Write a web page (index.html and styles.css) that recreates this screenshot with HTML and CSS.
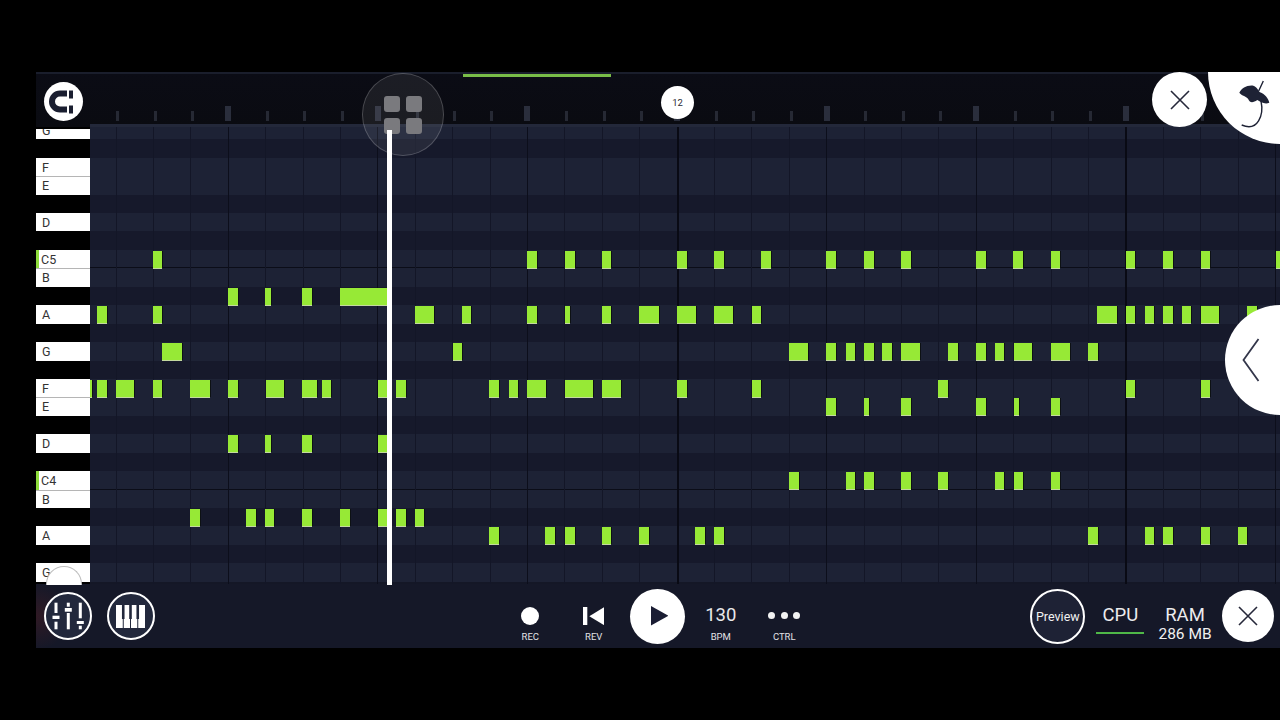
FILE: index.html
```html
<!DOCTYPE html>
<html lang="en">
<head>
<meta charset="utf-8">
<title>Piano roll</title>
<link rel="stylesheet" href="styles.css">
</head>
<body>
<main class="app">
  <header class="topbar">
    <div class="magnet-slot">
      <button class="magnet">
        <svg viewBox="0 0 39 39" width="39" height="39"><path d="M23 11.5H16a8 8 0 0 0 0 16H23" fill="none" stroke="#1a1e30" stroke-width="6"/><rect x="25" y="8.5" width="4" height="8" fill="#1a1e30"/><rect x="25" y="23.5" width="4" height="8" fill="#1a1e30"/></svg>
      </button>
    </div>
    <div class="ruler">
      <i></i><i></i><i></i><i class="big"></i><i></i><i></i><i></i><i class="big"></i><i></i><i></i><i></i><i class="big"></i><i></i><i></i><i></i><i class="big"></i><i></i><i></i><i></i><i class="big"></i><i></i><i></i><i></i><i class="big"></i><i></i><i></i><i></i><i class="big"></i><i></i><i></i><i></i><i class="big"></i>
    </div>
    <div class="progress"></div>
    <div class="bar-badge">12</div>
    <button class="round close-top"><svg viewBox="0 0 20 20" width="20" height="20"><path d="M1 1L19 19M19 1L1 19" stroke="#26283a" stroke-width="1.6"/></svg></button>
    <div class="logo">
      <svg viewBox="0 0 80 80" width="80" height="80"><path d="M39.300 22.700C41.700 18.300 46.700 15 53.300 15.700C56.700 16.700 58.300 20.700 60 22.300C65 24 68.300 28.300 69.300 32.700C65 35 60 31.700 57.300 30C53.300 32.700 50 33.300 48.300 29.300C46.700 26 41.700 26 39.300 22.700Z" fill="#1e2235"/><path d="M58.700 21L63.300 11M61 31C64 45 58 62 41.700 55" fill="none" stroke="#1e2235" stroke-width="1.400"/></svg>
    </div>
  </header>

  <section class="stage">
    <div class="keys">
      <div class="key-list">
        <div class="key">G</div><div class="key black"></div><div class="key">F</div><div class="key line">E</div><div class="key black"></div><div class="key">D</div><div class="key black"></div><div class="key c">C5</div><div class="key line">B</div><div class="key black"></div><div class="key">A</div><div class="key black"></div><div class="key">G</div><div class="key black"></div><div class="key">F</div><div class="key line">E</div><div class="key black"></div><div class="key">D</div><div class="key black"></div><div class="key c">C4</div><div class="key line">B</div><div class="key black"></div><div class="key">A</div><div class="key black"></div><div class="key">G</div>
      </div>
    </div>
    <div class="grid">
      <div class="lines">
        <i></i><i></i><i></i><i class="bar"></i><i></i><i></i><i></i><i class="bar"></i><i></i><i></i><i></i><i class="bar"></i><i></i><i></i><i></i><i class="sec"></i><i></i><i></i><i></i><i class="bar"></i><i></i><i></i><i></i><i class="bar"></i><i></i><i></i><i></i><i class="sec"></i><i></i><i></i><i></i><i class="bar"></i>
      </div>
      <div class="rows">
        <div class="row"></div>
        <div class="row dark"></div>
        <div class="row"></div>
        <div class="row"></div>
        <div class="row dark"></div>
        <div class="row"></div>
        <div class="row dark"></div>
        <div class="row oct">
          <b style="left:63px;width:9.3px"></b><b style="left:437px;width:10px"></b><b style="left:474.7px;width:10px"></b><b style="left:512px;width:9.3px"></b><b style="left:586.7px;width:10px"></b><b style="left:624.3px;width:9.7px"></b><b style="left:670.7px;width:10px"></b><b style="left:736px;width:10px"></b><b style="left:774px;width:10px"></b><b style="left:811.3px;width:9.4px"></b><b style="left:886px;width:9.7px"></b><b style="left:923.3px;width:10px"></b><b style="left:961px;width:9px"></b><b style="left:1035.7px;width:9.6px"></b><b style="left:1073px;width:10px"></b><b style="left:1111px;width:9px"></b><b style="left:1185.7px;width:6px"></b>
        </div>
        <div class="row"></div>
        <div class="row dark">
          <b style="left:138px;width:9.7px"></b><b style="left:175.3px;width:5.4px"></b><b style="left:212.3px;width:9.7px"></b><b style="left:250px;width:47px"></b>
        </div>
        <div class="row">
          <b style="left:6.7px;width:10px"></b><b style="left:63px;width:9.3px"></b><b style="left:325.3px;width:18.4px"></b><b style="left:371.7px;width:9.6px"></b><b style="left:437px;width:10px"></b><b style="left:474.7px;width:5.3px"></b><b style="left:512px;width:9.3px"></b><b style="left:549px;width:19.7px"></b><b style="left:586.7px;width:19px"></b><b style="left:624.3px;width:18.7px"></b><b style="left:661.7px;width:9.3px"></b><b style="left:1007.3px;width:19.7px"></b><b style="left:1035.7px;width:9.6px"></b><b style="left:1055px;width:8.7px"></b><b style="left:1073px;width:10px"></b><b style="left:1091.7px;width:9.6px"></b><b style="left:1111px;width:18.3px"></b><b style="left:1157.3px;width:9.4px"></b>
        </div>
        <div class="row dark"></div>
        <div class="row">
          <b style="left:72.3px;width:19.4px"></b><b style="left:362.7px;width:9px"></b><b style="left:699px;width:19.3px"></b><b style="left:736px;width:10px"></b><b style="left:755.7px;width:9px"></b><b style="left:774px;width:10px"></b><b style="left:792.3px;width:9.7px"></b><b style="left:811.3px;width:18.7px"></b><b style="left:858px;width:9.7px"></b><b style="left:886px;width:9.7px"></b><b style="left:905px;width:9px"></b><b style="left:923.7px;width:18.3px"></b><b style="left:961px;width:18.7px"></b><b style="left:998px;width:9.7px"></b>
        </div>
        <div class="row dark"></div>
        <div class="row">
          <b style="left:0;width:2px"></b><b style="left:6.7px;width:10px"></b><b style="left:26px;width:18.3px"></b><b style="left:63px;width:9.3px"></b><b style="left:100px;width:19.7px"></b><b style="left:138px;width:9.7px"></b><b style="left:175.7px;width:18.3px"></b><b style="left:212.3px;width:14.7px"></b><b style="left:231.7px;width:9.3px"></b><b style="left:287.7px;width:9.5px"></b><b style="left:306px;width:9.7px"></b><b style="left:399.3px;width:10px"></b><b style="left:419px;width:9px"></b><b style="left:437px;width:19px"></b><b style="left:474.7px;width:28.3px"></b><b style="left:512px;width:19px"></b><b style="left:586.7px;width:10px"></b><b style="left:661.7px;width:9.3px"></b><b style="left:848.3px;width:9.7px"></b><b style="left:1035.7px;width:9.6px"></b><b style="left:1111px;width:9px"></b>
        </div>
        <div class="row">
          <b style="left:736px;width:10px"></b><b style="left:774px;width:5px"></b><b style="left:811.3px;width:9.4px"></b><b style="left:886px;width:9.7px"></b><b style="left:923.7px;width:5px"></b><b style="left:961px;width:9px"></b>
        </div>
        <div class="row dark"></div>
        <div class="row">
          <b style="left:138px;width:9.7px"></b><b style="left:175.3px;width:5.4px"></b><b style="left:212.3px;width:9.7px"></b><b style="left:287.7px;width:9.5px"></b>
        </div>
        <div class="row dark"></div>
        <div class="row oct">
          <b style="left:699px;width:9.7px"></b><b style="left:755.7px;width:9px"></b><b style="left:774px;width:10px"></b><b style="left:811.3px;width:9.4px"></b><b style="left:848.3px;width:9.7px"></b><b style="left:905px;width:9px"></b><b style="left:923.7px;width:9.6px"></b><b style="left:961px;width:9px"></b>
        </div>
        <div class="row"></div>
        <div class="row dark">
          <b style="left:100.3px;width:9.7px"></b><b style="left:156.3px;width:9.7px"></b><b style="left:175.3px;width:9px"></b><b style="left:212.3px;width:9.7px"></b><b style="left:250px;width:9.7px"></b><b style="left:287.7px;width:9.5px"></b><b style="left:306px;width:9.7px"></b><b style="left:325px;width:9px"></b>
        </div>
        <div class="row">
          <b style="left:399.3px;width:10px"></b><b style="left:455.3px;width:10px"></b><b style="left:474.7px;width:10px"></b><b style="left:512px;width:9.3px"></b><b style="left:549px;width:10px"></b><b style="left:605px;width:10px"></b><b style="left:624.3px;width:9.7px"></b><b style="left:998px;width:9.7px"></b><b style="left:1055px;width:8.7px"></b><b style="left:1073px;width:10px"></b><b style="left:1111px;width:9px"></b><b style="left:1148.3px;width:9px"></b>
        </div>
        <div class="row dark"></div>
        <div class="row"></div>
      </div>
    </div>
    <div class="playhead"></div>
    <button class="round side-arrow"><svg viewBox="0 0 18 44" width="18" height="44"><path d="M16.500 1L1.500 22L16.500 43" fill="none" stroke="#33364a" stroke-width="1.800"/></svg></button>
  </section>

  <div class="knob">
    <span></span><span></span><span></span><span></span>
  </div>
  <div class="key-tab"></div>

  <footer class="bottombar">
    <div class="tools">
      <button class="tool">
        <svg viewBox="0 0 32 28" width="32" height="28" fill="#fff"><rect x="2.500" y="0.700" width="3" height="10.300"/><rect x="0.500" y="13.700" width="7" height="3.300"/><rect x="2.500" y="19.700" width="3" height="7.600"/><rect x="14.800" y="0.700" width="3" height="4"/><rect x="12.800" y="6" width="7" height="3.700"/><rect x="14.800" y="11" width="3" height="16.300"/><rect x="26.800" y="0.700" width="3" height="15.600"/><rect x="24.800" y="19" width="7" height="3"/><rect x="26.800" y="23.700" width="3" height="3.600"/></svg>
      </button>
      <button class="tool">
        <svg viewBox="0 0 29 23" width="29" height="23"><rect width="29" height="23" fill="#fff"/><path d="M7.250 0V23M14.500 0V23M21.750 0V23" stroke="#22283c" stroke-width="1"/><path d="M7.250 0V14M14.500 0V14M21.750 0V14" stroke="#22283c" stroke-width="2.600"/></svg>
      </button>
    </div>
    <div class="transport">
      <div class="item"><div class="slot"><span class="rec"></span></div><span class="label">REC</span></div>
      <div class="item"><div class="slot"><svg viewBox="0 0 21.300 18.300" width="21.300" height="18.300" fill="#fff"><rect width="4.300" height="18.300"/><polygon points="21.300,0 6.300,9.150 21.300,18.300"/></svg></div><span class="label">REV</span></div>
      <div class="item"><div class="slot"><button class="round play"><svg viewBox="0 0 17.400 19.600" width="17.400" height="19.600"><polygon points="0,0 17.400,9.800 0,19.600" fill="#1a1d33"/></svg></button></div></div>
      <div class="item"><div class="slot bpm">130</div><span class="label">BPM</span></div>
      <div class="item"><div class="slot dots"><span></span><span></span><span></span></div><span class="label">CTRL</span></div>
    </div>
    <div class="status">
      <button class="preview">Preview</button>
      <div class="meter cpu"><span class="meter-name">CPU</span><span class="meter-line"></span></div>
      <div class="meter ram"><span class="meter-name">RAM</span><span class="meter-value">286 MB</span></div>
      <button class="round close-bottom"><svg viewBox="0 0 20 20" width="20" height="20"><path d="M1 1L19 19M19 1L1 19" stroke="#26283a" stroke-width="1.600"/></svg></button>
    </div>
  </footer>
</main>
</body>
</html>
```
FILE: styles.css
```css
* { box-sizing: border-box; }
html, body { margin: 0; height: 100%; background: #000; overflow: hidden; }
body { font-family: Roboto, "Liberation Sans", sans-serif; color: #fff; padding: 72px 0 0 36px; }
button { border: 0; padding: 0; font: inherit; color: inherit; background: none; }
button svg, .logo svg { display: block; }

.app { position: relative; width: 1244px; height: 576px; display: flex; flex-direction: column; overflow: hidden; background: #151828; }

/* top bar */
.topbar { position: relative; flex: none; height: 55px; display: flex; background: linear-gradient(#0b0c15, #0a0b11); border-top: 2px solid #1a1e2c; z-index: 3; }
.topbar::after { content: ""; position: absolute; left: 54px; right: 0; bottom: 0; height: 3px; background: #23283a; }
.magnet-slot { flex: none; width: 54px; padding: 8px 0 0 7.5px; }
.magnet { display: block; width: 39px; height: 39px; border-radius: 50%; background: #fff; }
.ruler { flex: 1; display: grid; grid-template-columns: 25.5px repeat(32, 37.42px); padding-bottom: 6px; align-items: end; }
.ruler i { display: block; height: 10px; width: 3px; margin-left: 0.8px; background: #262934; }
.ruler i:first-child { grid-column: 2; }
.ruler i.big { height: 15.5px; width: 6px; margin-left: -2.5px; background: #2a2e3c; }
.progress { position: absolute; left: 427px; top: 0; width: 148px; height: 3px; background: #79bd48; }
.bar-badge { position: absolute; left: 625px; top: 12px; width: 33px; height: 33px; border-radius: 50%; background: #fff; color: #2a2a33; font-size: 9.5px; display: flex; align-items: center; justify-content: center; }
.round { display: flex; align-items: center; justify-content: center; border-radius: 50%; background: #fff; }
.close-top { position: absolute; left: 1116px; top: -2px; width: 55px; height: 55px; z-index: 2; }
.logo { position: absolute; left: 1172px; top: -74px; width: 144px; height: 144px; border-radius: 50%; background: #fff; z-index: 2; }
.logo svg { position: absolute; left: -8px; top: 70px; }

/* note area */
.stage { position: relative; flex: none; height: 457px; display: flex; background: #000; }
.keys { flex: none; width: 54px; margin-top: 2px; overflow: hidden; }
.key-list { margin-top: -8.2px; display: flex; flex-direction: column; }
.key { position: relative; flex: none; height: 18.45px; padding-left: 6px; background: #fff; color: #333; font-size: 12.5px; line-height: 20px; }
.key.black { background: transparent; }
.key.line { box-shadow: inset 0 1px 0 #b5b5b5; }
.key.c { padding-left: 2px; border-left: 3px solid #8fdc3c; }

.grid { position: relative; flex: 1; overflow: hidden; background: #141726; }
.rows { margin-top: -6.2px; display: flex; flex-direction: column; }
.row { position: relative; flex: none; height: 18.45px; background: #1d2235; }
.row.dark { background: #16192b; }
.row.oct { box-shadow: inset 0 -1px 0 #0b0d18; }
.row b { position: absolute; top: 1px; height: 17px; background: #97e936; box-shadow: 1px 0 0 #0d1114, 0 1px 0 #c4d9a0; z-index: 2; }

.lines { position: absolute; inset: 0; display: grid; grid-template-columns: 25.5px repeat(32, 37.42px); z-index: 1; }
.lines i { display: block; border-left: 1px solid #131627; }
.lines i:first-child { grid-column: 2; }
.lines i.bar { border-left-color: #0c0e1b; }
.lines i.sec { border-left: 2px solid #090a14; }

.playhead { position: absolute; left: 351px; top: 3px; bottom: -1px; width: 4.5px; background: #fff; z-index: 6; }
.side-arrow { position: absolute; left: 1189px; top: 178px; width: 110px; height: 110px; z-index: 4; justify-content: flex-start; padding-left: 17px; }

/* overlays */
.knob { position: absolute; left: 325.500px; top: 1px; width: 82.500px; height: 83px; border-radius: 50%; background: rgba(255,255,255,.07); border: 1px solid rgba(255,255,255,.2); padding: 22px 21.500px; display: grid; grid-template-columns: 16px 16px; grid-auto-rows: 16px; gap: 6px 5.500px; z-index: 5; }
.knob span { border-radius: 3px; background: #7a7a7e; }
.key-tab { position: absolute; left: 10px; top: 494px; width: 36px; height: 19px; border-radius: 18px 18px 0 0; background: #fff; border: 1px solid #bdbdbd; border-bottom: 0; z-index: 5; }

/* bottom bar */
.bottombar { position: relative; flex: none; height: 64px; display: flex; background: radial-gradient(circle at 0 50%, rgba(80,28,32,.45), rgba(80,28,32,0) 34px), #151828; z-index: 2; }
.tools { flex: none; display: flex; gap: 15px; padding: 8px 0 0 7.500px; }
.tool { width: 48px; height: 48px; border-radius: 50%; border: 2px solid #fff; background: #22283c; display: flex; align-items: center; justify-content: center; }
.transport { flex: none; display: flex; margin-left: 344px; }
.item { flex: none; width: 63.500px; padding-top: 16px; display: flex; flex-direction: column; align-items: center; }
.slot { flex: none; height: 32px; display: flex; align-items: center; justify-content: center; }
.label { font-size: 9.500px; line-height: 10px; color: #e2e2e6; margin-top: -0.5px; }
.rec { width: 18px; height: 18px; border-radius: 50%; background: #fff; }
.play { flex: none; width: 55px; height: 55px; padding-left: 4px; }
.bpm { font-size: 18.500px; color: #e8e8ea; padding-bottom: 2px; }
.dots { gap: 5.500px; padding-bottom: 1px; }
.dots span { width: 7px; height: 7px; border-radius: 50%; background: #f2f2f2; }
.status { flex: 1; display: flex; justify-content: flex-end; padding: 5px 5.700px 0 0; }
.preview { flex: none; width: 55px; height: 55px; border-radius: 50%; border: 2px solid #fff; background: #1e2235; font-size: 12.500px; color: #f0f0f0; text-align: center; }
.meter { flex: none; display: flex; flex-direction: column; align-items: center; padding-top: 16px; }
.meter-name { font-size: 18.500px; line-height: 20px; color: #ececee; }
.cpu { width: 48px; margin-left: 11px; }
.meter-line { width: 48px; height: 2px; margin-top: 7px; background: #4fb848; }
.ram { width: 54px; margin-left: 13.700px; }
.meter-value { font-size: 15.500px; line-height: 16px; margin-top: 0.700px; color: #f0f0f0; white-space: nowrap; }
.close-bottom { flex: none; width: 52px; height: 52px; margin: 1px 0 0 10.300px; }
```
